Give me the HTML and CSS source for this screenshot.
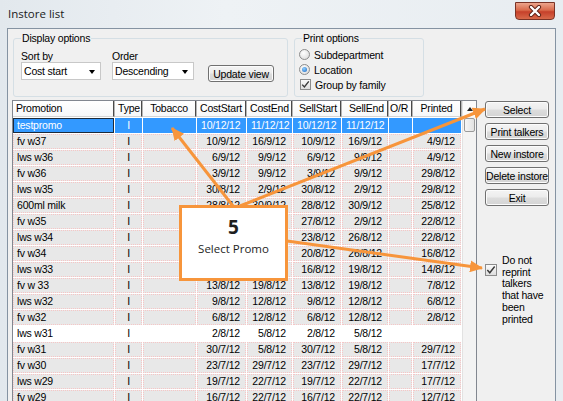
FILE: index.html
```html
<!DOCTYPE html>
<html>
<head>
<meta charset="utf-8">
<title>Instore list</title>
<link rel="stylesheet" href="styles.css">
</head>
<body>
<div class="window">
  <div class="titlebar">
    <span class="title">Instore list</span>
    <div class="close">
      <svg width="16" height="12" viewBox="0 0 16 12"><path d="M4 2 L12 10 M12 2 L4 10" stroke="#5a1f14" stroke-width="4.2" stroke-linecap="round"/><path d="M4 2 L12 10 M12 2 L4 10" stroke="#ffffff" stroke-width="2.4" stroke-linecap="round"/></svg>
    </div>
  </div>
  <div class="client">
    <div class="options">
      <fieldset class="group display">
        <legend>Display options</legend>
        <div class="display-row">
          <div class="field sort">
            <div class="lbl">Sort by</div>
            <div class="combo"><span>Cost start</span><i class="caret"></i></div>
          </div>
          <div class="field order">
            <div class="lbl">Order</div>
            <div class="combo"><span>Descending</span><i class="caret"></i></div>
          </div>
          <div class="btn update">Update view</div>
        </div>
      </fieldset>
      <fieldset class="group print">
        <legend>Print options</legend>
        <div class="opt"><span class="radio"></span>Subdepartment</div>
        <div class="opt"><span class="radio on"></span>Location</div>
        <div class="opt"><span class="check"><svg width="9" height="9" viewBox="0 0 9 9"><path d="M1.2 4.6 L3.4 7 L7.8 1.4" fill="none" stroke="#3a3a3a" stroke-width="1.4"/></svg></span>Group by family</div>
      </fieldset>
    </div>
    <div class="main">
      <div class="list">
        <div class="grid">
          <div class="row head">
            <span class="h">Promotion</span><span class="h">Type</span><span class="h ctr">Tobacco</span><span class="h">CostStart</span><span class="h">CostEnd</span><span class="h p6">SellStart</span><span class="h p7">SellEnd</span><span class="h p1">O/R</span><span class="h ctr">Printed</span>
          </div>
          <div class="row sel">
            <span class="c name focus">testpromo</span><span class="c t">I</span><span class="c"></span><span class="c d">10/12/12</span><span class="c d">11/12/12</span><span class="c d">10/12/12</span><span class="c d">11/12/12</span><span class="c"></span><span class="c d"></span>
          </div>
          <div class="row"><span class="c name">fv w37</span><span class="c t">I</span><span class="c"></span><span class="c d">10/9/12</span><span class="c d">16/9/12</span><span class="c d">10/9/12</span><span class="c d">16/9/12</span><span class="c"></span><span class="c d">4/9/12</span></div>
          <div class="row"><span class="c name">lws w36</span><span class="c t">I</span><span class="c"></span><span class="c d">6/9/12</span><span class="c d">9/9/12</span><span class="c d">6/9/12</span><span class="c d">9/9/12</span><span class="c"></span><span class="c d">4/9/12</span></div>
          <div class="row"><span class="c name">fv w36</span><span class="c t">I</span><span class="c"></span><span class="c d">3/9/12</span><span class="c d">9/9/12</span><span class="c d">3/9/12</span><span class="c d">9/9/12</span><span class="c"></span><span class="c d">29/8/12</span></div>
          <div class="row"><span class="c name">lws w35</span><span class="c t">I</span><span class="c"></span><span class="c d">30/8/12</span><span class="c d">2/9/12</span><span class="c d">30/8/12</span><span class="c d">2/9/12</span><span class="c"></span><span class="c d">29/8/12</span></div>
          <div class="row"><span class="c name">600ml milk</span><span class="c t">I</span><span class="c"></span><span class="c d">28/8/12</span><span class="c d">30/9/12</span><span class="c d">28/8/12</span><span class="c d">30/9/12</span><span class="c"></span><span class="c d">25/8/12</span></div>
          <div class="row"><span class="c name">fv w35</span><span class="c t">I</span><span class="c"></span><span class="c d">27/8/12</span><span class="c d">2/9/12</span><span class="c d">27/8/12</span><span class="c d">2/9/12</span><span class="c"></span><span class="c d">22/8/12</span></div>
          <div class="row"><span class="c name">lws w34</span><span class="c t">I</span><span class="c"></span><span class="c d">23/8/12</span><span class="c d">26/8/12</span><span class="c d">23/8/12</span><span class="c d">26/8/12</span><span class="c"></span><span class="c d">22/8/12</span></div>
          <div class="row"><span class="c name">fv w34</span><span class="c t">I</span><span class="c"></span><span class="c d">20/8/12</span><span class="c d">26/8/12</span><span class="c d">20/8/12</span><span class="c d">26/8/12</span><span class="c"></span><span class="c d">16/8/12</span></div>
          <div class="row"><span class="c name">lws w33</span><span class="c t">I</span><span class="c"></span><span class="c d">16/8/12</span><span class="c d">19/8/12</span><span class="c d">16/8/12</span><span class="c d">19/8/12</span><span class="c"></span><span class="c d">14/8/12</span></div>
          <div class="row"><span class="c name">fv w 33</span><span class="c t">I</span><span class="c"></span><span class="c d">13/8/12</span><span class="c d">19/8/12</span><span class="c d">13/8/12</span><span class="c d">19/8/12</span><span class="c"></span><span class="c d">7/8/12</span></div>
          <div class="row"><span class="c name">lws w32</span><span class="c t">I</span><span class="c"></span><span class="c d">9/8/12</span><span class="c d">12/8/12</span><span class="c d">9/8/12</span><span class="c d">12/8/12</span><span class="c"></span><span class="c d">6/8/12</span></div>
          <div class="row"><span class="c name">fv w32</span><span class="c t">I</span><span class="c"></span><span class="c d">6/8/12</span><span class="c d">12/8/12</span><span class="c d">6/8/12</span><span class="c d">12/8/12</span><span class="c"></span><span class="c d">2/8/12</span></div>
          <div class="row plain"><span class="c name">lws w31</span><span class="c t">I</span><span class="c"></span><span class="c d">2/8/12</span><span class="c d">5/8/12</span><span class="c d">2/8/12</span><span class="c d">5/8/12</span><span class="c"></span><span class="c d"></span></div>
          <div class="row"><span class="c name">fv w31</span><span class="c t">I</span><span class="c"></span><span class="c d">30/7/12</span><span class="c d">5/8/12</span><span class="c d">30/7/12</span><span class="c d">5/8/12</span><span class="c"></span><span class="c d">29/7/12</span></div>
          <div class="row"><span class="c name">fv w30</span><span class="c t">I</span><span class="c"></span><span class="c d">23/7/12</span><span class="c d">29/7/12</span><span class="c d">23/7/12</span><span class="c d">29/7/12</span><span class="c"></span><span class="c d">17/7/12</span></div>
          <div class="row"><span class="c name">lws w29</span><span class="c t">I</span><span class="c"></span><span class="c d">19/7/12</span><span class="c d">22/7/12</span><span class="c d">19/7/12</span><span class="c d">22/7/12</span><span class="c"></span><span class="c d">17/7/12</span></div>
          <div class="row"><span class="c name">fv w29</span><span class="c t">I</span><span class="c"></span><span class="c d">16/7/12</span><span class="c d">22/7/12</span><span class="c d">16/7/12</span><span class="c d">22/7/12</span><span class="c"></span><span class="c d">12/7/12</span></div>
        </div>
        <div class="scrollbar">
          <div class="sb-up"><i class="up"></i></div>
          <div class="sb-thumb"></div>
        </div>
      </div>
      <div class="side">
        <div class="btn side-btn">Select</div>
        <div class="btn side-btn">Print talkers</div>
        <div class="btn side-btn">New instore</div>
        <div class="btn side-btn">Delete instore</div>
        <div class="btn side-btn">Exit</div>
        <div class="noreprint">
          <span class="check big"><svg width="10" height="10" viewBox="0 0 9 9"><path d="M1.2 4.6 L3.4 7 L7.8 1.4" fill="none" stroke="#3a3a3a" stroke-width="1.3"/></svg></span>
          <span class="nr-text">Do not reprint talkers that have been printed</span>
        </div>
      </div>
    </div>
  </div>
</div>

<svg class="arrows" width="563" height="401" viewBox="0 0 563 401">
  <defs>
    <marker id="ah" markerUnits="userSpaceOnUse" markerWidth="14" markerHeight="12" refX="12" refY="6" orient="auto">
      <path d="M0 0 L13 6 L0 12 Z" fill="#f7953b"/>
    </marker>
  </defs>
  <g stroke="#f7953b" stroke-width="3" fill="none">
    <line x1="233" y1="206" x2="172" y2="128" marker-end="url(#ah)"/>
    <line x1="240" y1="206" x2="485" y2="109" marker-end="url(#ah)"/>
    <line x1="287" y1="241" x2="482" y2="268" marker-end="url(#ah)"/>
  </g>
</svg>
<div class="callout">
  <span class="num">5</span>
  <span class="cap">Select Promo</span>
</div>
</body>
</html>
```

FILE: styles.css
```css
* { box-sizing: border-box; }

body {
  margin: 0;
  width: 563px;
  height: 401px;
  overflow: hidden;
  position: relative;
  font-family: "Liberation Sans", Arial, sans-serif;
  font-size: 10.5px;
  letter-spacing: -0.2px;
  color: #000;
  background: #e6ebef;
}

.window {
  height: 401px;
  padding: 0 7px;
  display: flex;
  flex-direction: column;
  background: linear-gradient(90deg, #e2e8ed, #eef2f5 40%, #e8edf1);
}

.titlebar {
  height: 28px;
  flex-shrink: 0;
  display: flex;
  justify-content: space-between;
  align-items: flex-start;
}

.title {
  font-family: "Open Sans", "Noto Sans", sans-serif;
  font-size: 11.5px;
  letter-spacing: 0;
  line-height: 16px;
  margin: 6px 0 0 1px;
  color: #1a1a1a;
}

.close {
  width: 40px;
  height: 18px;
  margin: 2px 1px 0 0;
  border: 1px solid #7a3326;
  border-radius: 0 0 4px 4px;
  background: linear-gradient(#eca58c, #d96a4b 45%, #c6402a 55%, #d8694a);
  display: flex;
  align-items: center;
  justify-content: center;
}

.client {
  flex: 1;
  min-height: 0;
  display: flex;
  flex-direction: column;
  border: 1px solid #8593a2;
  border-bottom: none;
  background: #f0f0f0;
  padding: 3px 0 0 4px;
}

.options {
  display: flex;
  gap: 6px;
  margin-left: 1px;
  flex-shrink: 0;
}

.group {
  margin: 0;
  height: 65px;
  min-width: 0;
  border: 1px solid #d5dfe5;
  border-radius: 3px;
}

.group legend {
  padding: 0 1px;
  line-height: 12px;
}

.display {
  width: 275px;
  padding: 7px 0 0 7px;
}

.print {
  width: 130px;
  padding: 3px 0 0 4px;
}

.print legend { margin-left: 3px; }

.display-row {
  display: flex;
  align-items: flex-start;
}

.lbl {
  line-height: 11px;
  height: 11px;
}

.sort { width: 80px; }
.order { width: 82px; margin-left: 11px; }

.combo {
  height: 18px;
  border: 1px solid #c8c8c8;
  background: #fff;
  display: flex;
  align-items: center;
  justify-content: space-between;
  padding: 0 5px 0 2px;
}

.caret {
  width: 0;
  height: 0;
  border-left: 3.5px solid transparent;
  border-right: 3.5px solid transparent;
  border-top: 4px solid #000;
  margin-top: 2px;
}

.btn {
  height: 17px;
  border: 1px solid #707070;
  border-radius: 3px;
  background: linear-gradient(#f4f4f4, #ececec 48%, #dddddd 52%, #d4d4d4);
  box-shadow: inset 0 0 0 1px #fcfcfc;
  display: flex;
  align-items: center;
  justify-content: center;
  white-space: nowrap;
}

.update {
  width: 66px;
  margin: 14px 0 0 14px;
}

.opt {
  height: 15px;
  display: flex;
  align-items: center;
}

.radio {
  width: 11px;
  height: 11px;
  border-radius: 50%;
  border: 1px solid #8c8c8c;
  background: radial-gradient(circle at 40% 35%, #ffffff, #d6d6d6);
  margin-right: 4px;
  display: flex;
  align-items: center;
  justify-content: center;
}

.radio.on::after {
  content: "";
  width: 5px;
  height: 5px;
  border-radius: 50%;
  background: radial-gradient(circle at 40% 35%, #8fd0ff, #1a66c2);
}

.check {
  width: 11px;
  height: 11px;
  border: 1px solid #8c8c8c;
  background: linear-gradient(#fafafa, #dedede);
  margin: 0 4px 0 1px;
  display: flex;
  align-items: center;
  justify-content: center;
}

.main {
  flex: 1;
  min-height: 0;
  display: flex;
  align-items: flex-start;
  margin-top: 3px;
}

.list {
  width: 465px;
  height: 320px;
  border: 1px solid #828790;
  background: #fff;
  display: flex;
  overflow: hidden;
}

.grid {
  width: 449px;
  flex-shrink: 0;
}

.row {
  display: grid;
  grid-template-columns: 101px 27px 53px 49px 45px 48px 46px 23px 48px;
  column-gap: 1px;
  height: 15px;
  margin-bottom: 1px;
}

.row.head {
  height: 16px;
}

.h {
  background: linear-gradient(#ffffff, #f7f8f9);
  border-right: 1px solid #4a4a4a;
  box-shadow: 1px 0 0 #b5b5b5;
  border-bottom: 1px solid #d5d5d5;
  line-height: 15px;
  padding-left: 3px;
  white-space: nowrap;
  overflow: hidden;
}

.h.ctr { text-align: center; padding-left: 0; }
.h.p6 { padding-left: 6px; }
.h.p7 { padding-left: 7px; }
.h.p1 { padding-left: 1px; }

.c {
  background: #e8e8e8;
  border: 1px dotted #f6c6c6;
  line-height: 13px;
  padding: 0 3px;
  white-space: nowrap;
  overflow: hidden;
}

.c.t { text-align: center; }
.c.d { text-align: right; padding-right: 5px; }

.row.plain .c {
  background: #fff;
  border-color: #fff;
}

.row.sel .c {
  background: #3399ff;
  border-color: #3399ff;
  color: #fff;
}

.row.sel .c.focus {
  border: 1px solid #1c2a3a;
}

.scrollbar {
  width: 14px;
  background: #f3f3f3;
  border-left: 1px solid #e2e2e2;
}

.sb-up {
  height: 16px;
  background: #fbfbfb;
  display: flex;
  align-items: center;
  justify-content: center;
}

.up {
  width: 0;
  height: 0;
  border-left: 3.5px solid transparent;
  border-right: 3.5px solid transparent;
  border-bottom: 4px solid #222;
}

.sb-thumb {
  width: 11px;
  height: 14px;
  margin: 1px 0 0 1px;
  border: 1px solid #9a9a9a;
  border-radius: 2px;
  background: linear-gradient(90deg, #f6f6f6, #e2e2e2);
}

.side {
  width: 64px;
  margin-left: 8px;
  padding-top: 1px;
  display: flex;
  flex-direction: column;
}

.side-btn + .side-btn { margin-top: 5px; }

.noreprint {
  margin-top: 49px;
  display: flex;
  align-items: flex-start;
}

.check.big {
  width: 12px;
  height: 12px;
  margin: 9px 5px 0 0;
  flex-shrink: 0;
}

.nr-text {
  width: 50px;
  line-height: 11.7px;
}

.arrows {
  position: absolute;
  left: 0;
  top: 0;
  pointer-events: none;
}

.callout {
  position: absolute;
  left: 179px;
  top: 205px;
  width: 109px;
  height: 76px;
  border: 3px solid #f7953b;
  background: #fff;
  display: flex;
  flex-direction: column;
  align-items: center;
  font-family: "Open Sans", "Noto Sans", sans-serif;
  letter-spacing: 0;
  color: #1e1e1e;
}

.num {
  font-weight: 700;
  font-size: 19px;
  line-height: 22px;
  margin-top: 8px;
}

.cap {
  font-size: 11.5px;
  line-height: 16px;
  margin-top: 3px;
}
```
